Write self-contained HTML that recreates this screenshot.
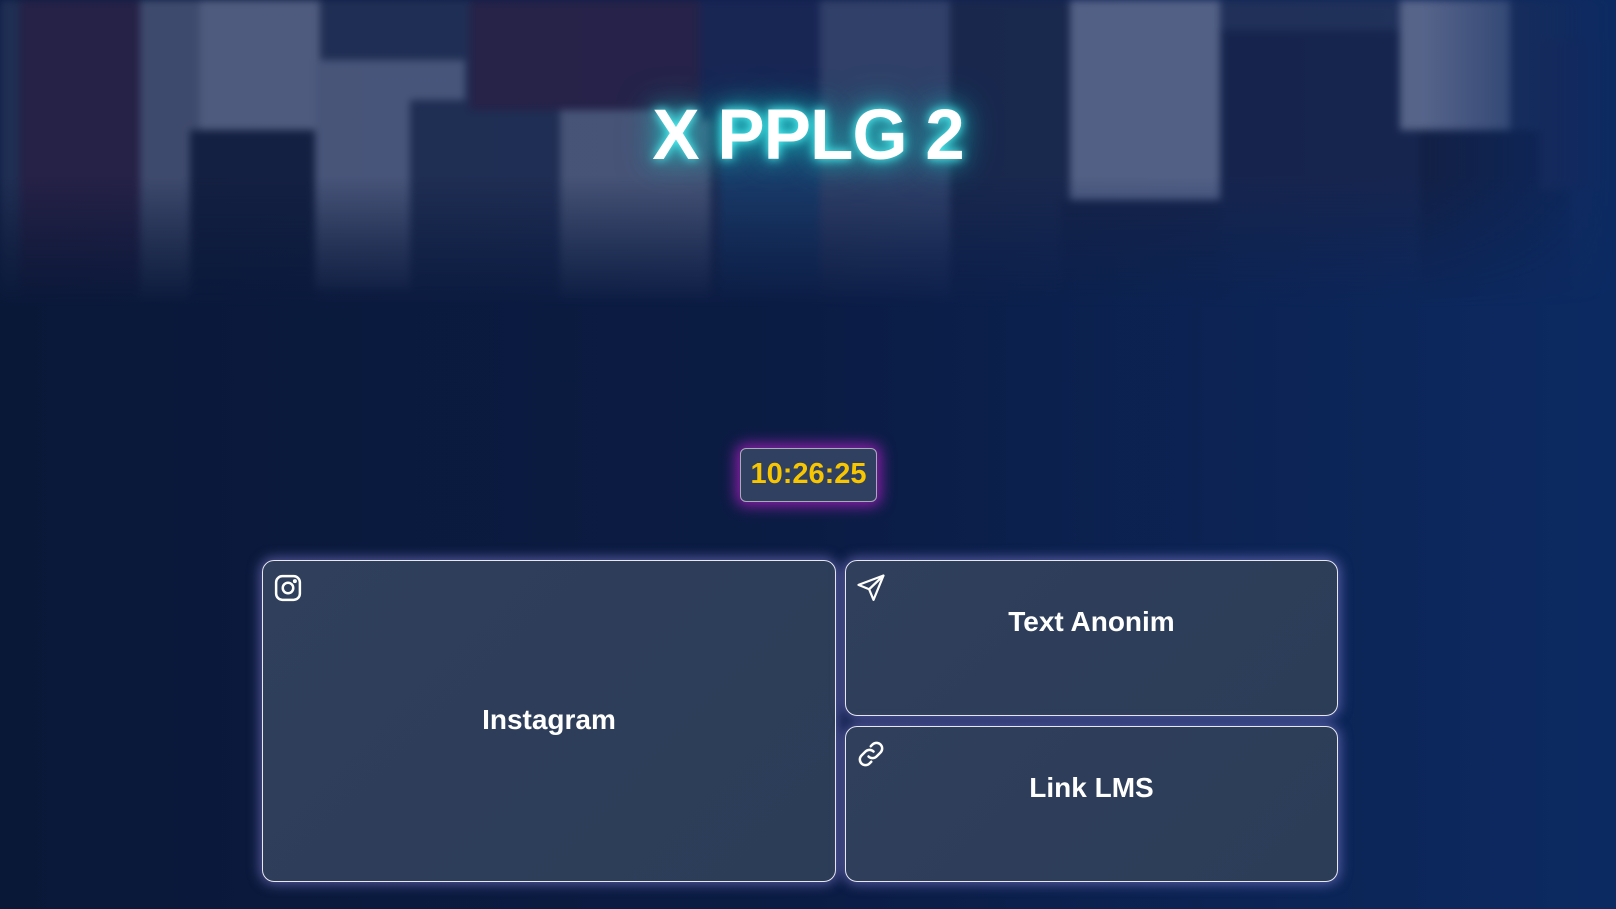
<!DOCTYPE html>
<html><head><meta charset="utf-8"><style>
*{margin:0;padding:0;box-sizing:border-box}
body{width:1616px;height:909px;overflow:hidden;font-family:"Liberation Sans",sans-serif;
background:linear-gradient(90deg,#0a1838 0%,#0b1c44 50%,#0c2a62 100%);position:relative}
.wrap{position:absolute;left:0;top:0;width:1616px;height:320px;
-webkit-mask-image:linear-gradient(180deg,#000 0%,#000 55%,rgba(0,0,0,0.4) 78%,transparent 96%);
mask-image:linear-gradient(180deg,#000 0%,#000 55%,rgba(0,0,0,0.4) 78%,transparent 96%);opacity:0.8}
.wrap2{position:absolute;left:0;top:0;width:1616px;height:320px;
-webkit-mask-image:linear-gradient(90deg,#000 0%,#000 88%,transparent 100%);mask-image:linear-gradient(90deg,#000 0%,#000 88%,transparent 100%)}
.photo{position:absolute;left:0;top:0;width:1616px;height:320px;overflow:hidden;filter:blur(4px)}
.photo div{position:absolute}
.tint{position:absolute;left:0;top:0;width:1616px;height:320px;background:rgba(20,38,90,0.45)}
h1{position:absolute;left:0;width:1616px;top:95px;text-align:center;color:#fff;font-size:71px;font-weight:900;letter-spacing:-1px;
text-shadow:0 0 10px #5ff,0 0 24px #2cc,0 0 40px #1aa}
.clock{position:absolute;left:740px;top:448px;width:137px;height:54px;background:#2f4060;border:1.5px solid #aab;border-radius:6px;
box-shadow:0 0 14px 4px #8a1fa8;color:#f7c600;font-weight:bold;font-size:29px;text-align:center;line-height:51px}
.card{position:absolute;background:linear-gradient(135deg,#2f3f5c,#2c3d58);border:1.5px solid #e8e8f4;border-radius:12px;
box-shadow:0 0 12px 2px rgba(150,140,230,0.55);color:#fff;font-weight:bold;font-size:28px;text-align:center}
.card svg{position:absolute;left:10px;top:12px}
</style></head><body>
<div class="wrap"><div class="wrap2">
<div class="photo">
<div style="left:0;top:0;width:1616px;height:320px;background:#34405a"></div>
<div style="left:20px;top:0;width:120px;height:300px;background:#42233c"></div>
<div style="left:140px;top:0;width:60px;height:300px;background:#7a8094"></div>
<div style="left:200px;top:0;width:120px;height:130px;background:#a0a6ba"></div>
<div style="left:190px;top:130px;width:130px;height:170px;background:#1a2030"></div>
<div style="left:315px;top:60px;width:150px;height:230px;background:#9098b0"></div>
<div style="left:410px;top:100px;width:150px;height:200px;background:#343e58"></div>
<div style="left:470px;top:0;width:230px;height:110px;background:#42243e"></div>
<div style="left:560px;top:110px;width:150px;height:190px;background:#8c94a8"></div>
<div style="left:700px;top:0;width:120px;height:120px;background:#232c58"></div>
<div style="left:720px;top:120px;width:100px;height:180px;background:#285c88"></div>
<div style="left:820px;top:0;width:130px;height:300px;background:#5a6684"></div>
<div style="left:950px;top:0;width:120px;height:300px;background:#262e44"></div>
<div style="left:1070px;top:0;width:150px;height:200px;background:#a8aec2"></div>
<div style="left:1060px;top:200px;width:170px;height:100px;background:#1c2236"></div>
<div style="left:1220px;top:30px;width:200px;height:270px;background:#1e2640"></div>
<div style="left:1400px;top:0;width:110px;height:130px;background:#b0b4c6"></div>
<div style="left:1420px;top:130px;width:150px;height:170px;background:#141a2c"></div>
<div style="left:1540px;top:40px;width:76px;height:150px;background:#403250"></div>
</div>
<div class="tint"></div>
</div></div>
<h1>X PPLG 2</h1>
<div class="clock">10:26:25</div>
<div class="card" style="left:262px;top:560px;width:574px;height:322px;line-height:318px">
<svg width="30" height="30" viewBox="0 0 24 24" fill="none" stroke="#fff" stroke-width="2" stroke-linecap="round"><rect x="2.5" y="2.5" width="19" height="19" rx="5"/><circle cx="12" cy="12" r="4.2"/><circle cx="17.5" cy="6.5" r="0.6" fill="#fff"/></svg>
Instagram</div>
<div class="card" style="left:845px;top:560px;width:493px;height:156px;padding-top:45px;line-height:32px">
<svg width="30" height="30" viewBox="0 0 24 24" fill="none" stroke="#fff" stroke-width="1.8" stroke-linejoin="round"><path d="M22 2 2 9.5l8.5 3.5L14 21.5z"/><path d="M10.5 13 22 2"/></svg>
Text Anonim</div>
<div class="card" style="left:845px;top:726px;width:493px;height:156px;padding-top:45px;line-height:32px">
<svg width="30" height="30" viewBox="0 0 24 24" fill="none" stroke="#fff" stroke-width="2" stroke-linecap="round"><path d="M10 14a4.5 4.5 0 0 0 6.4 0l3.2-3.2a4.5 4.5 0 0 0-6.4-6.4l-1.4 1.4"/><path d="M14 10a4.5 4.5 0 0 0-6.4 0l-3.2 3.2a4.5 4.5 0 0 0 6.4 6.4l1.4-1.4"/></svg>
Link LMS</div>
</body></html>
